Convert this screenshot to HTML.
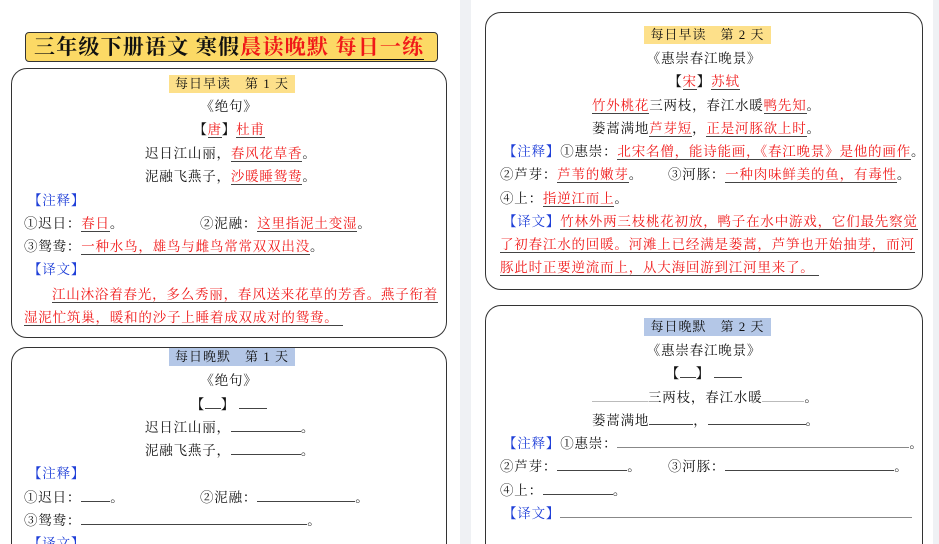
<!DOCTYPE html>
<html style="width:939px;height:544px;overflow:hidden"><head><meta charset="utf-8"><style>
*{margin:0;padding:0;box-sizing:border-box}
body{width:939px;height:544px;overflow:hidden;background:#fff;position:relative;font-family:"Liberation Serif","Noto Serif CJK SC",serif;font-size:13.5px;color:#111}
.g{position:absolute;top:0;height:544px;background:#eff1f4}
.box{position:absolute;border:1.3px solid #333;border-radius:16px;background:#fff}
.l{position:absolute;white-space:nowrap;line-height:18px;height:18px;letter-spacing:0.8px}
.c{text-align:center}
.r{color:#f01818}
.u{border-bottom:1px solid #444;color:#f01818}
.b{color:#1f3fd8}
.hd{position:absolute;height:18px;line-height:18px;text-align:center;letter-spacing:1px;font-size:13px}
.bl{display:inline-block;border-bottom:1px solid #444;height:13px;vertical-align:baseline}
</style></head><body>
<div class="g" style="left:460px;width:11px"></div>
<div class="g" style="left:933px;width:6px"></div>

<!-- title -->
<div style="position:absolute;left:25px;top:32px;width:413px;height:30px;background:#fcd965;border:1px solid #333;border-radius:4px;font-size:21px;line-height:28px;padding-left:8px;white-space:nowrap;letter-spacing:1.2px;font-weight:bold">三年级下册语文 寒假<span style="color:#f01818;border-bottom:1.5px solid #111">晨读晚默 每日一练</span></div>

<!-- left box1 -->
<div class="box" style="left:11px;top:68px;width:436px;height:270px"></div>
<div class="hd" style="left:169px;top:75px;width:126px;background:#fde08a">每日早读　第 1 天</div>
<div class="l c" style="left:11px;width:436px;top:98px">《绝句》</div>
<div class="l c" style="left:11px;width:436px;top:121px"><b>【</b><span class="u">唐</span><b>】</b><span class="u">杜甫</span></div>
<div class="l" style="left:145px;top:145px">迟日江山丽，<span class="u">春风花草香</span>。</div>
<div class="l" style="left:145px;top:168px">泥融飞燕子，<span class="u">沙暖睡鸳鸯</span>。</div>
<div class="l b" style="left:28px;top:192px">【注释】</div>
<div class="l" style="left:24px;top:215px">①迟日：<span class="u">春日</span>。</div>
<div class="l" style="left:200px;top:215px">②泥融：<span class="u">这里指泥土变湿</span>。</div>
<div class="l" style="left:24px;top:238px">③鸳鸯：<span class="u">一种水鸟，雄鸟与雌鸟常常双双出没</span>。</div>
<div class="l b" style="left:28px;top:261px">【译文】</div>
<div class="l r" style="left:52px;top:286px"><span class="u">江山沐浴着春光，多么秀丽，春风送来花草的芳香。燕子衔着</span></div>
<div class="l r" style="left:24px;top:309px"><span class="u">湿泥忙筑巢，暖和的沙子上睡着成双成对的鸳鸯。&nbsp;</span></div>

<!-- left box2 -->
<div class="box" style="left:11px;top:347px;width:436px;height:220px"></div>
<div class="hd" style="left:169px;top:348px;width:126px;background:#b4c7e7">每日晚默　第 1 天</div>
<div class="l c" style="left:11px;width:436px;top:372px">《绝句》</div>
<div class="l c" style="left:11px;width:436px;top:396px"><b>【<span class="bl" style="width:16px"></span>】</b> <span class="bl" style="width:28px;border-width:1.5px"></span></div>
<div class="l" style="left:145px;top:419px">迟日江山丽，<span class="bl" style="width:70px"></span>。</div>
<div class="l" style="left:145px;top:442px">泥融飞燕子，<span class="bl" style="width:70px"></span>。</div>
<div class="l b" style="left:28px;top:465px">【注释】</div>
<div class="l" style="left:24px;top:489px">①迟日：<span class="bl" style="width:29px"></span>。</div>
<div class="l" style="left:200px;top:489px">②泥融：<span class="bl" style="width:98px"></span>。</div>
<div class="l" style="left:24px;top:512px">③鸳鸯：<span class="bl" style="width:226px"></span>。</div>
<div class="l b" style="left:28px;top:535px">【译文】</div>

<!-- right box1 -->
<div class="box" style="left:485px;top:12px;width:438px;height:278px"></div>
<div class="hd" style="left:644px;top:26px;width:127px;background:#fde08a">每日早读　第 2 天</div>
<div class="l c" style="left:485px;width:438px;top:50px">《惠崇春江晚景》</div>
<div class="l c" style="left:485px;width:438px;top:73px"><b>【</b><span class="u">宋</span><b>】</b><span class="u">苏轼</span></div>
<div class="l" style="left:592px;top:97px"><span class="u">竹外桃花</span>三两枝，春江水暖<span class="u">鸭先知</span>。</div>
<div class="l" style="left:592px;top:120px">蒌蒿满地<span class="u">芦芽短</span>，<span class="u">正是河豚欲上时</span>。</div>
<div class="l" style="left:503px;top:143px"><span class="b">【注释】</span>①惠崇：<span class="u">北宋名僧，能诗能画，《春江晚景》是他的画作</span>。</div>
<div class="l" style="left:500px;top:166px">②芦芽：<span class="u">芦苇的嫩芽</span>。</div>
<div class="l" style="left:668px;top:166px">③河豚：<span class="u">一种肉味鲜美的鱼，有毒性</span>。</div>
<div class="l" style="left:500px;top:190px">④上：<span class="u">指逆江而上</span>。</div>
<div class="l" style="left:503px;top:213px"><span class="b">【译文】</span><span class="u">竹林外两三枝桃花初放，鸭子在水中游戏，它们最先察觉</span></div>
<div class="l r" style="left:500px;top:236px"><span class="u">了初春江水的回暖。河滩上已经满是蒌蒿，芦笋也开始抽芽，而河</span></div>
<div class="l r" style="left:500px;top:259px"><span class="u">豚此时正要逆流而上，从大海回游到江河里来了。&nbsp;</span></div>

<!-- right box2 -->
<div class="box" style="left:485px;top:305px;width:438px;height:260px"></div>
<div class="hd" style="left:644px;top:318px;width:127px;background:#b4c7e7">每日晚默　第 2 天</div>
<div class="l c" style="left:485px;width:438px;top:342px">《惠崇春江晚景》</div>
<div class="l c" style="left:485px;width:438px;top:365px"><b>【<span class="bl" style="width:16px"></span>】</b> <span class="bl" style="width:28px;border-width:1.5px"></span></div>
<div class="l" style="left:592px;top:389px"><span class="bl" style="width:56px;border-color:#bbb"></span>三两枝，春江水暖<span class="bl" style="width:42px;border-color:#bbb"></span>。</div>
<div class="l" style="left:592px;top:412px">蒌蒿满地<span class="bl" style="width:44px"></span>，<span class="bl" style="width:98px"></span>。</div>
<div class="l" style="left:503px;top:435px"><span class="b">【注释】</span>①惠崇：<span class="bl" style="width:292px;border-color:#888"></span>。</div>
<div class="l" style="left:500px;top:458px">②芦芽：<span class="bl" style="width:70px"></span>。</div>
<div class="l" style="left:668px;top:458px">③河豚：<span class="bl" style="width:169px"></span>。</div>
<div class="l" style="left:500px;top:482px">④上：<span class="bl" style="width:70px"></span>。</div>
<div class="l" style="left:503px;top:505px"><span class="b">【译文】</span><span class="bl" style="width:352px;border-color:#888"></span></div>
</body></html>
